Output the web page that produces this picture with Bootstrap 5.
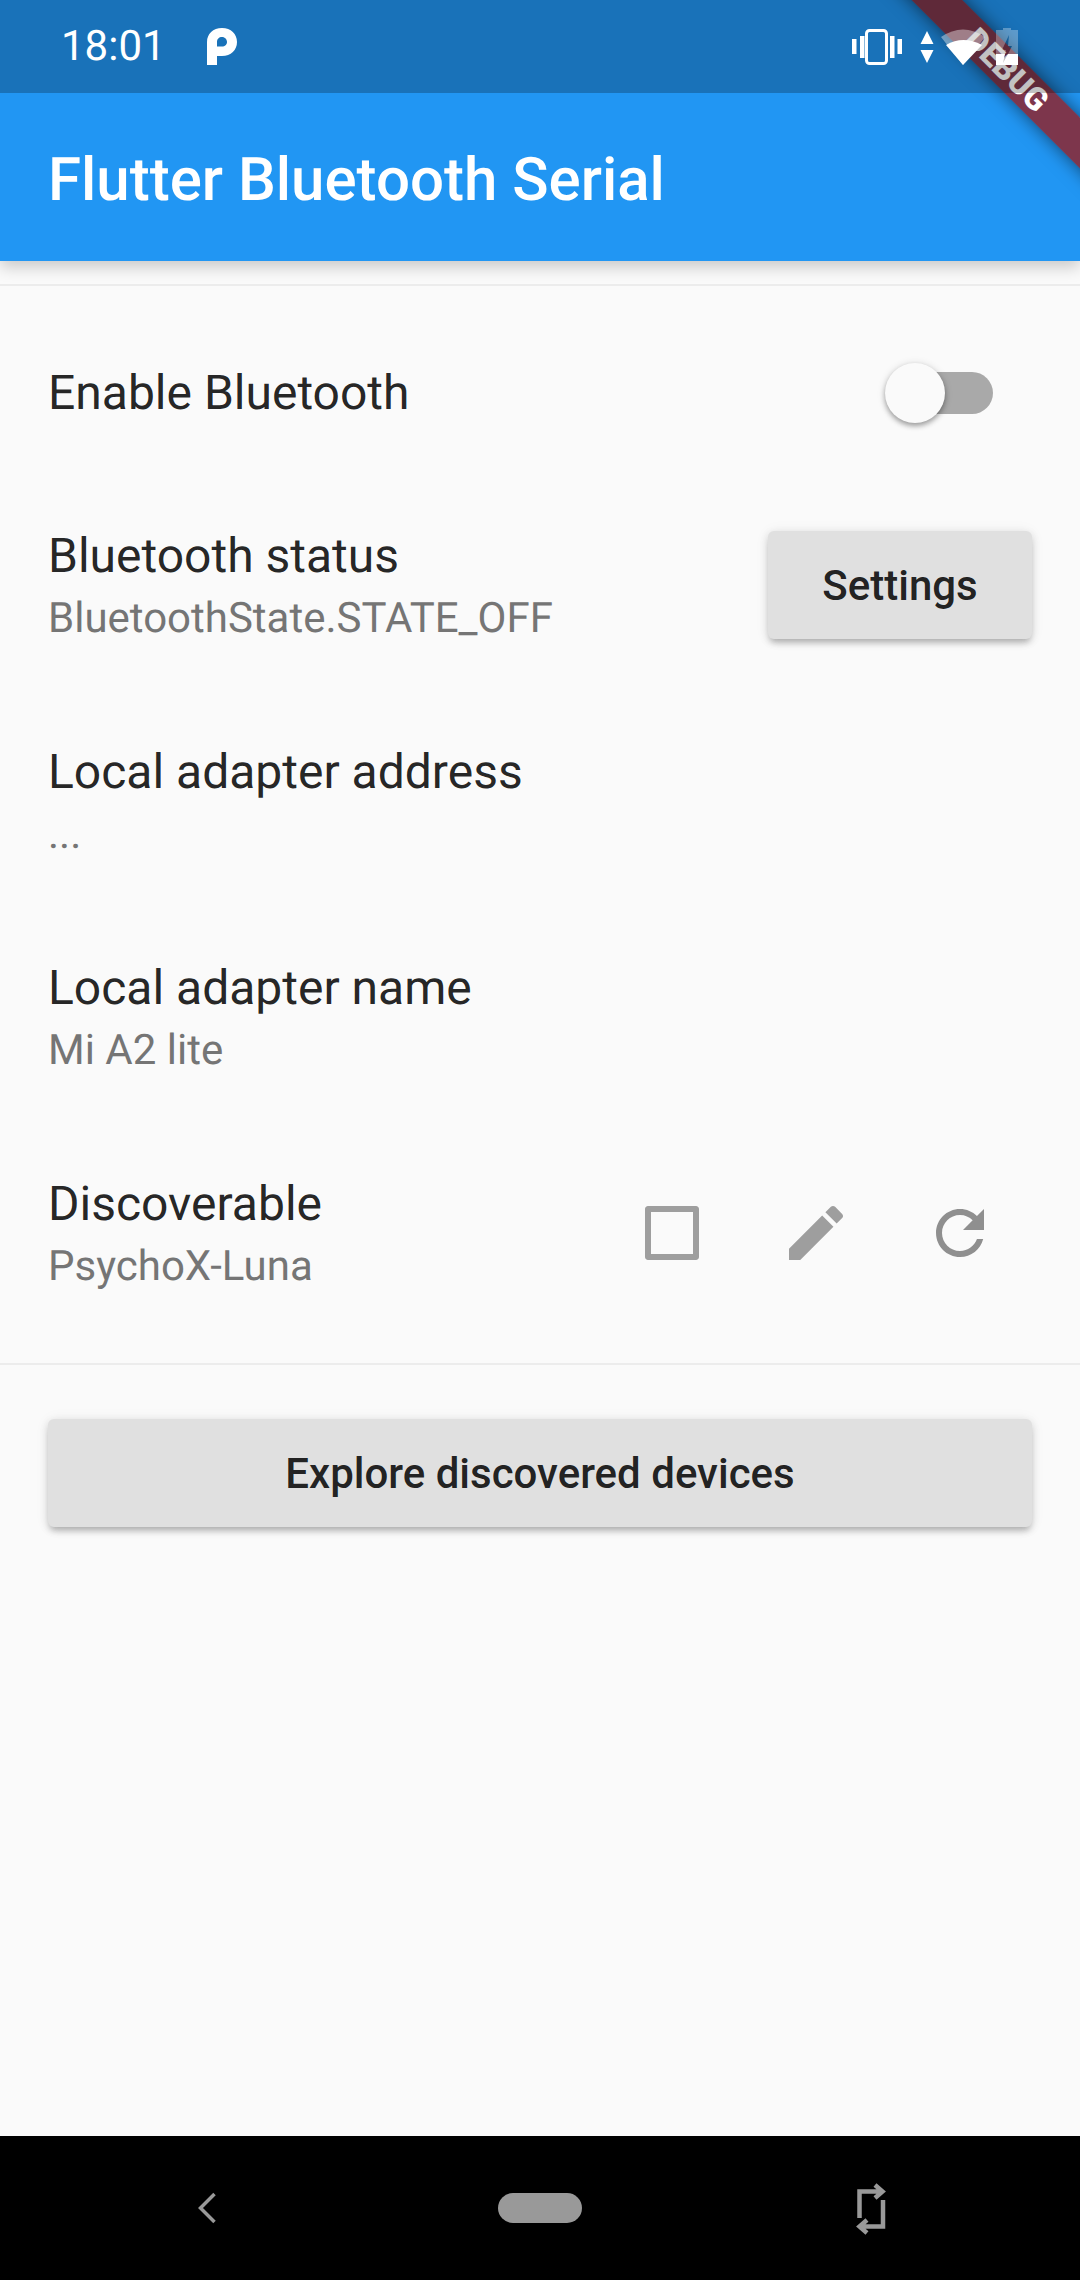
<!DOCTYPE html>
<html lang="en">
<head>
  <meta charset="UTF-8" />
  <meta name="viewport" content="width=device-width, initial-scale=1.0"/>
  <title>Flutter Bluetooth Serial</title>
  <link href="https://cdn.jsdelivr.net/npm/bootstrap@5.3.0/dist/css/bootstrap.min.css" rel="stylesheet" />
  <style>
    html, body { height: 100%; margin: 0; background: #fafafa; overflow: hidden; }
    body { font-family: Roboto, "Liberation Sans", sans-serif; color: rgba(0,0,0,.87); text-rendering: geometricPrecision; }
    .screen { width: 1080px; height: 2280px; overflow: hidden; }

    /* top of the screen */
    .app-head { background: #2196f3; box-shadow: 0 6px 15px rgba(0,0,0,.2); }
    .status-bar { height: 93px; background: rgba(0,0,0,.24); padding: 0 62px 0 61px; z-index: 3; }
    .status-time { font-size: 42px; color: #fff; line-height: 1; }
    .status-logo { margin-left: 41px; }
    .gap-arrows { margin-left: 18px; }
    .gap-wifi { margin-left: 7px; }
    .gap-battery { margin-left: 9px; }
    .title-bar { height: 168px; padding: 5px 0 0 48px; font-size: 60px; font-weight: 500; color: #fff; }

    /* debug ribbon */
    .debug-ribbon {
      left: 807px; top: 52px; width: 400px; height: 36px; z-index: 2;
      background: rgba(127,52,72,.98); box-shadow: 0 0 18px rgba(0,0,0,.55);
      transform: rotate(45deg); color: #fff; font-size: 32px; font-weight: 900; line-height: 36px;
      text-align: center;
    }

    .rule { height: 48px; }
    .rule hr { width: 100%; margin: 0; border: 0; height: 2px; background: #ececec; opacity: 1; }

    .tile { height: 216px; padding: 0 48px; }
    .tile-first { height: 167px; }
    .tile-text { padding-top: 6px; }
    .tile-title { font-size: 48px; line-height: 63px; }
    .tile-sub { font-size: 42px; line-height: 63px; color: #757575; }

    .raised {
      background: #e0e0e0; border: 0; border-radius: 6px; height: 108px; color: rgba(0,0,0,.87);
      font-size: 42px; font-weight: 500; padding: 0;
      box-shadow: 0 6px 6px -3px rgba(0,0,0,.2), 0 3px 9px rgba(0,0,0,.14), 0 1px 15px rgba(0,0,0,.06);
    }
    .raised-small { width: 264px; margin-top: 2px; }

    .switch-box { width: 108px; height: 60px; margin-right: 39px; }
    .switch-track { right: 0; top: 9px; width: 102px; height: 42px; border-radius: 21px; background: #a9a9a9; }
    .switch-thumb { left: 0; top: 0; width: 60px; height: 60px; border-radius: 50%; background: #fafafa;
      box-shadow: 0 3px 5px rgba(0,0,0,.3), 0 1px 8px rgba(0,0,0,.14); }

    .tool-icons { gap: 72px; margin: 2px 36px 0 0; }
    .tool-icons svg { display: block; }

    .explore-wrap { padding: 31px 48px 0; }
    .spacer-fill { flex: 1; }

    .nav-strip { height: 144px; background: #000; }
    .nav-back { margin-left: 197px; }
    .nav-pill { width: 84px; height: 30px; margin-left: 281px; border-radius: 15px; background: #999; }
    .nav-rot { margin-left: 258px; }
  </style>
</head>
<body>
  <div class="screen d-flex flex-column position-relative">

    <div class="app-head position-relative">
      <div class="status-bar d-flex align-items-center position-relative">
        <span class="status-time">18:01</span>
        <svg class="status-logo" width="30" height="37" viewBox="0 0 30 37"><path fill="#fff" fill-rule="evenodd" d="M0 37V14C0 6 6 0 15 0s15 6 15 14-6 14-15 14h-5v9z M10 18.500h5c3 0 5-2 5-4.500s-2-5-5-5-5 2-5 5z"/></svg>
        <div class="ms-auto d-flex align-items-center">
          <svg width="50" height="36" viewBox="0 0 50 36" fill="#fff"><rect x="0" y="10" width="4.500" height="15"/><rect x="8" y="7" width="4.500" height="22"/><rect x="38" y="7" width="4.500" height="22"/><rect x="45.500" y="10" width="4.500" height="15"/><rect x="14.500" y="1.500" width="20" height="33" rx="3" fill="none" stroke="#fff" stroke-width="3"/></svg>
          <svg class="gap-arrows" width="14" height="32" viewBox="0 0 14 32" fill="#fff"><path d="M7 0l6.500 13H.5zM7 32L.5 19h13z"/></svg>
          <svg class="gap-wifi" width="46" height="36" viewBox="0 0 46 36" fill="#fff"><path opacity=".4" d="M0 8Q22-7 44 8L22 36z"/><path d="M5 16Q22 6 41 16L22 36z"/></svg>
          <svg class="gap-battery" width="22" height="38" viewBox="0 0 22 38" fill="#fff"><path opacity=".3" fill-rule="evenodd" d="M7 0h8v2h7v24H0V2h7z M13 7L6 22h4l-1 4h3l4-8h-4z"/><path d="M0 26h9l-2 9 5-9h10v11H0z"/></svg>
        </div>
      </div>
      <div class="title-bar d-flex align-items-center">Flutter Bluetooth Serial</div>
      <div class="debug-ribbon position-absolute">DEBUG</div>
    </div>

    <div class="rule d-flex align-items-center"><hr></div>

    <div class="tile tile-first d-flex align-items-center justify-content-between">
      <div class="tile-title">Enable Bluetooth</div>
      <div class="switch-box position-relative">
        <div class="switch-track position-absolute"></div>
        <div class="switch-thumb position-absolute"></div>
      </div>
    </div>

    <div class="tile d-flex align-items-center justify-content-between">
      <div class="tile-text">
        <div class="tile-title">Bluetooth status</div>
        <div class="tile-sub">BluetoothState.STATE_OFF</div>
      </div>
      <button class="raised raised-small">Settings</button>
    </div>

    <div class="tile d-flex align-items-center">
      <div class="tile-text">
        <div class="tile-title">Local adapter address</div>
        <div class="tile-sub">...</div>
      </div>
    </div>

    <div class="tile d-flex align-items-center">
      <div class="tile-text">
        <div class="tile-title">Local adapter name</div>
        <div class="tile-sub">Mi A2 lite</div>
      </div>
    </div>

    <div class="tile d-flex align-items-center justify-content-between">
      <div class="tile-text">
        <div class="tile-title">Discoverable</div>
        <div class="tile-sub">PsychoX-Luna</div>
      </div>
      <div class="tool-icons d-flex align-items-center">
        <svg width="72" height="72" viewBox="0 0 24 24" fill="#9e9e9e"><path fill-rule="evenodd" d="M4 3h16c.55 0 1 .45 1 1v16c0 .55-.45 1-1 1H4c-.55 0-1-.45-1-1V4c0-.55.45-1 1-1zm1 2v14h14V5z"/></svg>
        <svg width="72" height="72" viewBox="0 0 24 24" fill="#9e9e9e"><path d="M3 17.250V21h3.750L17.810 9.940l-3.750-3.750L3 17.250zM20.710 7.040c.39-.39.39-1.020 0-1.410l-2.340-2.340c-.39-.39-1.020-.39-1.410 0l-1.830 1.830 3.750 3.750 1.830-1.830z"/></svg>
        <svg width="72" height="72" viewBox="0 0 24 24" fill="#8f8f8f"><path d="M17.650 6.350C16.200 4.900 14.210 4 12 4c-4.420 0-7.990 3.580-7.990 8s3.570 8 7.990 8c3.730 0 6.840-2.550 7.730-6h-2.080c-.82 2.330-3.040 4-5.650 4-3.310 0-6-2.690-6-6s2.690-6 6-6c1.660 0 3.140.69 4.220 1.780L13 11h7V4l-2.350 2.350z"/></svg>
      </div>
    </div>

    <div class="rule d-flex align-items-center"><hr></div>

    <div class="explore-wrap">
      <button class="raised w-100">Explore discovered devices</button>
    </div>

    <div class="spacer-fill"></div>

    <div class="nav-strip d-flex align-items-center">
      <svg class="nav-back" width="20" height="32" viewBox="0 0 20 32"><path d="M17.500 2L3.500 16l14 14" fill="none" stroke="#999" stroke-width="3.500"/></svg>
      <div class="nav-pill"></div>
      <svg class="nav-rot" width="60" height="75" viewBox="0 0 60 75" fill="none" stroke="#999" stroke-width="4.500"><path d="M19.500 47V20.500H42M35 14l7.500 6.500L35 27M43 29v26.500H20M27 49l-7.500 6.500L27 62"/></svg>
    </div>
  </div>
  <script src="https://cdn.jsdelivr.net/npm/bootstrap@5.3.0/dist/js/bootstrap.bundle.min.js"></script>
</body>
</html>
